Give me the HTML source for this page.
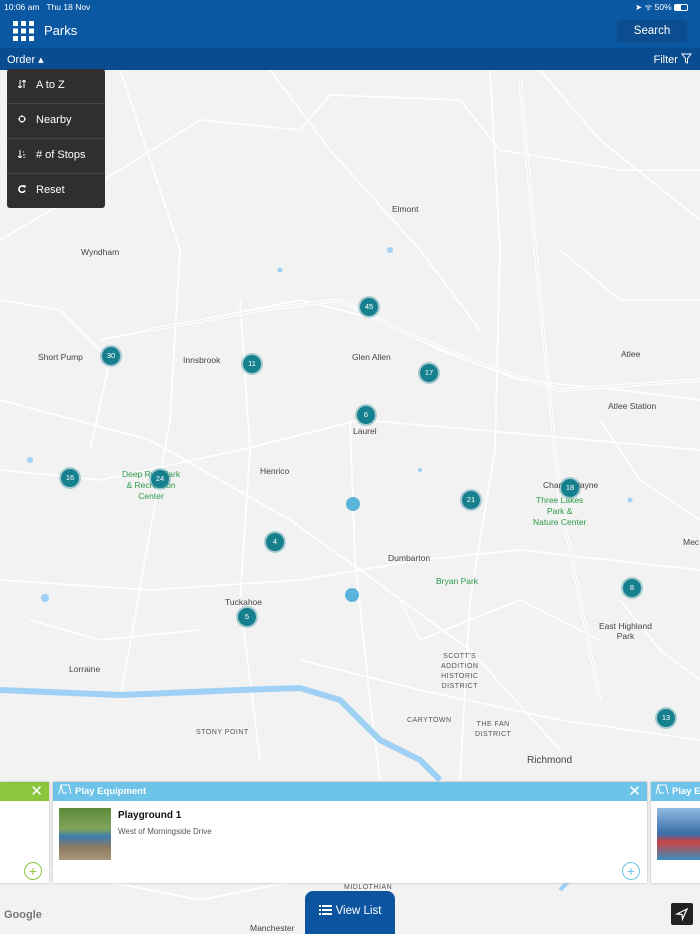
<!DOCTYPE html>
<html><head><meta charset="utf-8"><style>
*{margin:0;padding:0;box-sizing:border-box}
body{width:700px;height:934px;overflow:hidden;position:relative;background:#f2f2f2;font-family:"Liberation Sans",sans-serif}
.lbl{position:absolute;font-size:8px;color:#444;white-space:nowrap}
.g{position:absolute;font-size:8.5px;color:#2a9a4a;text-align:center;line-height:11px}
.m{position:absolute;width:18px;height:18px;border-radius:50%;background:#17808e;color:#fff;font-size:7.5px;text-align:center;line-height:18px;box-shadow:0 0 0 2px rgba(23,128,142,.35)}
.cap{font-size:7px;letter-spacing:.5px;color:#555}
</style></head><body>
<svg width="700" height="934" style="position:absolute;left:0;top:0" fill="none" stroke="#fff" stroke-width="1.6">
<path d="M0 240 L120 170 L200 120 L300 130 L330 95 L460 100 L500 150 L620 170 L700 170"/>
<path d="M100 340 L200 320 L300 300 L380 320 L440 350 L520 380 L620 390 L700 400"/>
<path d="M0 580 L150 590 L300 580 L420 560 L520 550 L700 570"/>
<path d="M0 400 L150 440 L290 520 L360 570 L470 650 L560 750"/>
<path d="M490 70 L500 250 L495 450 L470 600 L460 780"/>
<path d="M240 300 L250 450 L240 600 L260 760"/>
<path d="M0 470 L100 480 L240 450 L360 420 L480 430 L700 450"/>
<path d="M350 420 L355 560 L370 700 L380 780"/>
<path d="M120 70 L180 250 L170 420 L120 700"/>
<path d="M600 420 L640 480 L700 520"/>
<path d="M300 660 L420 690 L560 720 L700 740"/>
<path d="M0 860 L200 900 L350 870 L500 860 L700 880"/>
<path d="M270 70 L330 150 L420 250 L480 330"/>
<path d="M540 70 L600 140 L700 220"/>
<path d="M0 300 L60 310 L110 360 L90 450"/>
<path d="M560 250 L620 300 L700 300"/>
<path d="M620 600 L660 650 L700 680"/>
<path d="M30 620 L100 640 L200 630"/>
<path d="M400 600 L420 640 L520 600 L600 640"/>
<path d="M520 80 L540 300 L560 500 L600 700" stroke-width="3.5"/>
<path d="M520 80 L540 300 L560 500 L600 700" stroke="#e6e6e6" stroke-width="0.8"/>
<path d="M150 330 L260 310 L340 300 L400 330 L470 360 L560 390 L700 380" stroke-width="3.5"/>
<path d="M150 330 L260 310 L340 300 L400 330 L470 360 L560 390 L700 380" stroke="#e6e6e6" stroke-width="0.8"/>
</svg>
<svg width="700" height="934" style="position:absolute;left:0;top:0">
<path d="M0 690 L120 695 L240 690 L300 688 L340 700 L380 740 L420 760 L440 780" stroke="#9fd0f5" stroke-width="6" fill="none"/>
<path d="M560 890 L590 860 L610 840" stroke="#9fd0f5" stroke-width="4" fill="none"/>
<circle cx="45" cy="598" r="4" fill="#9fd0f5"/><circle cx="390" cy="250" r="3" fill="#9fd0f5"/><circle cx="630" cy="500" r="2.5" fill="#9fd0f5"/>
<circle cx="30" cy="460" r="3" fill="#9fd0f5"/><circle cx="280" cy="270" r="2.5" fill="#9fd0f5"/><circle cx="420" cy="470" r="2" fill="#9fd0f5"/>
</svg>
<div class="lbl" style="left:392px;top:204px;font-size:8.5px">Elmont</div>
<div class="lbl" style="left:81px;top:247px;font-size:8.5px">Wyndham</div>
<div class="lbl" style="left:38px;top:352px;font-size:8.5px">Short Pump</div>
<div class="lbl" style="left:183px;top:355px;font-size:8.5px">Innsbrook</div>
<div class="lbl" style="left:352px;top:352px;font-size:8.5px">Glen Allen</div>
<div class="lbl" style="left:621px;top:349px;font-size:8.5px">Atlee</div>
<div class="lbl" style="left:608px;top:401px;font-size:8.5px">Atlee Station</div>
<div class="lbl" style="left:353px;top:426px;font-size:8.5px">Laurel</div>
<div class="lbl" style="left:260px;top:466px;font-size:8.5px">Henrico</div>
<div class="lbl" style="left:543px;top:480px;font-size:8.5px">Chamberlayne</div>
<div class="lbl" style="left:683px;top:537px;font-size:8.5px">Mec</div>
<div class="lbl" style="left:388px;top:553px;font-size:8.5px">Dumbarton</div>
<div class="lbl" style="left:225px;top:597px;font-size:8.5px">Tuckahoe</div>
<div class="lbl" style="left:599px;top:621px;font-size:8.5px;text-align:center;line-height:10px">East Highland<br>Park</div>
<div class="lbl" style="left:69px;top:664px;font-size:8.5px">Lorraine</div>
<div class="lbl cap" style="left:441px;top:652px;text-align:center;line-height:10px">SCOTT'S<br>ADDITION<br>HISTORIC<br>DISTRICT</div>
<div class="lbl cap" style="left:407px;top:717px">CARYTOWN</div>
<div class="lbl cap" style="left:475px;top:720px;text-align:center;line-height:10px">THE FAN<br>DISTRICT</div>
<div class="lbl cap" style="left:196px;top:729px">STONY POINT</div>
<div class="lbl" style="left:527px;top:755px;font-size:10px">Richmond</div>
<div class="lbl cap" style="left:344px;top:884px">MIDLOTHIAN</div>
<div class="lbl" style="left:250px;top:923px;font-size:8.5px">Manchester</div>
<div class="g" style="left:122px;top:469px">Deep Run Park<br>&amp; Recreation<br>Center</div>
<div class="g" style="left:533px;top:495px">Three Lakes<br>Park &amp;<br>Nature Center</div>
<div class="g" style="left:436px;top:576px">Bryan Park</div>
<div class="m" style="left:360px;top:298px">45</div>
<div class="m" style="left:102px;top:347px">30</div>
<div class="m" style="left:243px;top:355px">11</div>
<div class="m" style="left:420px;top:364px">17</div>
<div class="m" style="left:357px;top:406px">6</div>
<div class="m" style="left:61px;top:469px">16</div>
<div class="m" style="left:151px;top:470px">24</div>
<div class="m" style="left:462px;top:491px">21</div>
<div class="m" style="left:561px;top:479px">18</div>
<div class="m" style="left:346px;top:497px;background:#5ab3d8;box-shadow:none;width:14px;height:14px"></div>
<div class="m" style="left:266px;top:533px">4</div>
<div class="m" style="left:345px;top:588px;background:#5ab3d8;box-shadow:none;width:14px;height:14px"></div>
<div class="m" style="left:623px;top:579px">8</div>
<div class="m" style="left:238px;top:608px">5</div>
<div class="m" style="left:657px;top:709px">13</div>
<!-- header -->
<div style="position:absolute;left:0;top:0;width:700px;height:48px;background:#0a57a2"></div>
<div style="position:absolute;left:4px;top:2px;font-size:8.5px;color:#fff">10:06 am&nbsp;&nbsp; Thu 18 Nov</div>
<div style="position:absolute;right:12px;top:2px;font-size:8.5px;color:#fff">➤ ᯤ 50% <span style="display:inline-block;width:14px;height:7px;border:1px solid #fff;border-radius:2px;vertical-align:-1px;background:linear-gradient(90deg,#fff 50%,transparent 50%)"></span></div>
<svg style="position:absolute;left:13px;top:21px" width="21" height="20" fill="#fff"><rect x="0" y="0" width="5" height="5"/><rect x="8" y="0" width="5" height="5"/><rect x="16" y="0" width="5" height="5"/><rect x="0" y="7.5" width="5" height="5"/><rect x="8" y="7.5" width="5" height="5"/><rect x="16" y="7.5" width="5" height="5"/><rect x="0" y="15" width="5" height="5"/><rect x="8" y="15" width="5" height="5"/><rect x="16" y="15" width="5" height="5"/></svg>
<div style="position:absolute;left:44px;top:23px;color:#fff;font-size:13px">Parks</div>
<div style="position:absolute;left:617px;top:20px;width:70px;height:22px;background:#0b4d8f;border-radius:3px;color:#fff;font-size:11.5px;text-align:center;line-height:22px">Search</div>
<div style="position:absolute;left:0;top:48px;width:700px;height:22px;background:#094c90"></div>
<div style="position:absolute;left:7px;top:53px;color:#fff;font-size:11px">Order ▴</div>
<div style="position:absolute;right:8px;top:53px;color:#fff;font-size:11px">Filter <svg width="11" height="11" style="vertical-align:-1px"><path d="M1 1H10L6.5 5.5V10L4.5 9V5.5Z" fill="none" stroke="#fff"/></svg></div>
<!-- dropdown -->
<div style="position:absolute;left:7px;top:69px;width:98px;height:139px;background:#2f2f2f;border-radius:3px;color:#fff;font-size:11px">
<div style="height:35px;line-height:33px;padding-left:11px;border-bottom:1px solid #444"><svg width="8" height="8" style="margin-right:10px"><path d="M2 0V8M0 6L2 8L4 6M6 8V0M4 2L6 0L8 2" stroke="#fff" fill="none"/></svg>A to Z</div>
<div style="height:35px;line-height:33px;padding-left:11px;border-bottom:1px solid #444"><svg width="8" height="8" style="margin-right:10px"><circle cx="4" cy="4" r="2.8" stroke="#fff" fill="none"/><path d="M4 0V2M4 6V8M0 4H2M6 4H8" stroke="#fff"/></svg>Nearby</div>
<div style="height:35px;line-height:33px;padding-left:11px;border-bottom:1px solid #444"><svg width="8" height="8" style="margin-right:10px"><path d="M2 0V8M0 6L2 8L4 6M5 8H8M5 5H7M5 2H6" stroke="#fff" fill="none"/></svg># of Stops</div>
<div style="height:34px;line-height:33px;padding-left:11px"><svg width="8" height="8" style="margin-right:10px"><path d="M6.5 2A3.2 3.2 0 1 0 7 5.5" stroke="#fff" stroke-width="1.6" fill="none"/><path d="M5 0L8 0.5L7 3.5Z" fill="#fff"/></svg>Reset</div>
</div>
<!-- cards -->
<div style="position:absolute;left:0;top:782px;width:49px;height:101px;background:#fff;box-shadow:0 0 2px #aaa">
<div style="height:19px;background:#8cc63f;color:#fff;font-size:15px;text-align:right;padding-right:6px;line-height:19px">✕</div>
<div style="position:absolute;left:24px;top:80px;width:18px;height:18px;border:1px solid #8cc63f;border-radius:50%;color:#8cc63f;text-align:center;line-height:16px;font-size:14px">+</div></div>
<div style="position:absolute;left:53px;top:782px;width:594px;height:101px;background:#fff;box-shadow:0 0 2px #aaa">
<div style="height:19px;background:#6ec3e8;color:#fff;font-size:9.5px;font-weight:bold;line-height:19px;padding-left:5px"><svg width="14" height="11" style="vertical-align:-1px;margin-right:3px"><path d="M1 10L3 1H11L13 10M3 1L5 9H9" stroke="#fff" fill="none"/></svg>Play Equipment<span style="position:absolute;right:6px;top:0;font-size:15px;font-weight:normal">✕</span></div>
<div style="position:absolute;left:6px;top:26px;width:52px;height:52px;background:linear-gradient(180deg,#5d8a3a 0%,#7fa45a 40%,#3e7bb0 55%,#8b7a5e 75%,#a8977c 100%)"></div>
<div style="position:absolute;left:65px;top:28px;font-size:10px;font-weight:bold;color:#111">Playground 1</div>
<div style="position:absolute;left:65px;top:45px;font-size:8px;color:#555">West of Morningside Drive</div>
<div style="position:absolute;left:569px;top:80px;width:18px;height:18px;border:1px solid #6ec3e8;border-radius:50%;color:#6ec3e8;text-align:center;line-height:16px;font-size:14px">+</div></div>
<div style="position:absolute;left:651px;top:782px;width:60px;height:101px;background:#fff;box-shadow:0 0 2px #aaa">
<div style="height:19px;background:#6ec3e8;color:#fff;font-size:9.5px;font-weight:bold;line-height:19px;padding-left:4px;white-space:nowrap"><svg width="14" height="11" style="vertical-align:-1px;margin-right:3px"><path d="M1 10L3 1H11L13 10M3 1L5 9H9" stroke="#fff" fill="none"/></svg>Play Eq</div>
<div style="position:absolute;left:6px;top:26px;width:50px;height:52px;background:linear-gradient(180deg,#8fb9e0 0%,#3a6ea8 50%,#c44 65%,#3a8fc0 100%)"></div></div>
<!-- bottom -->
<div style="position:absolute;left:305px;top:891px;width:90px;height:43px;background:#0b54a0;border-radius:8px 8px 0 0;color:#fff;font-size:11.5px;line-height:40px;text-align:center"><svg width="13" height="10" style="vertical-align:-1px;margin-right:4px" fill="#fff"><rect x="0" y="0" width="2" height="2"/><rect x="3" y="0" width="10" height="2"/><rect x="0" y="4" width="2" height="2"/><rect x="3" y="4" width="10" height="2"/><rect x="0" y="8" width="2" height="2"/><rect x="3" y="8" width="10" height="2"/></svg>View List</div>
<div style="position:absolute;left:4px;top:909px;font-size:11px;font-weight:bold;color:#777">Google</div>
<div style="position:absolute;left:671px;top:903px;width:22px;height:22px;background:#222;border-radius:2px"><svg width="22" height="22"><path d="M16 6L6 11L11 11.5L11.5 16Z" fill="none" stroke="#fff" stroke-width="1.2"/></svg></div>
</body></html>
